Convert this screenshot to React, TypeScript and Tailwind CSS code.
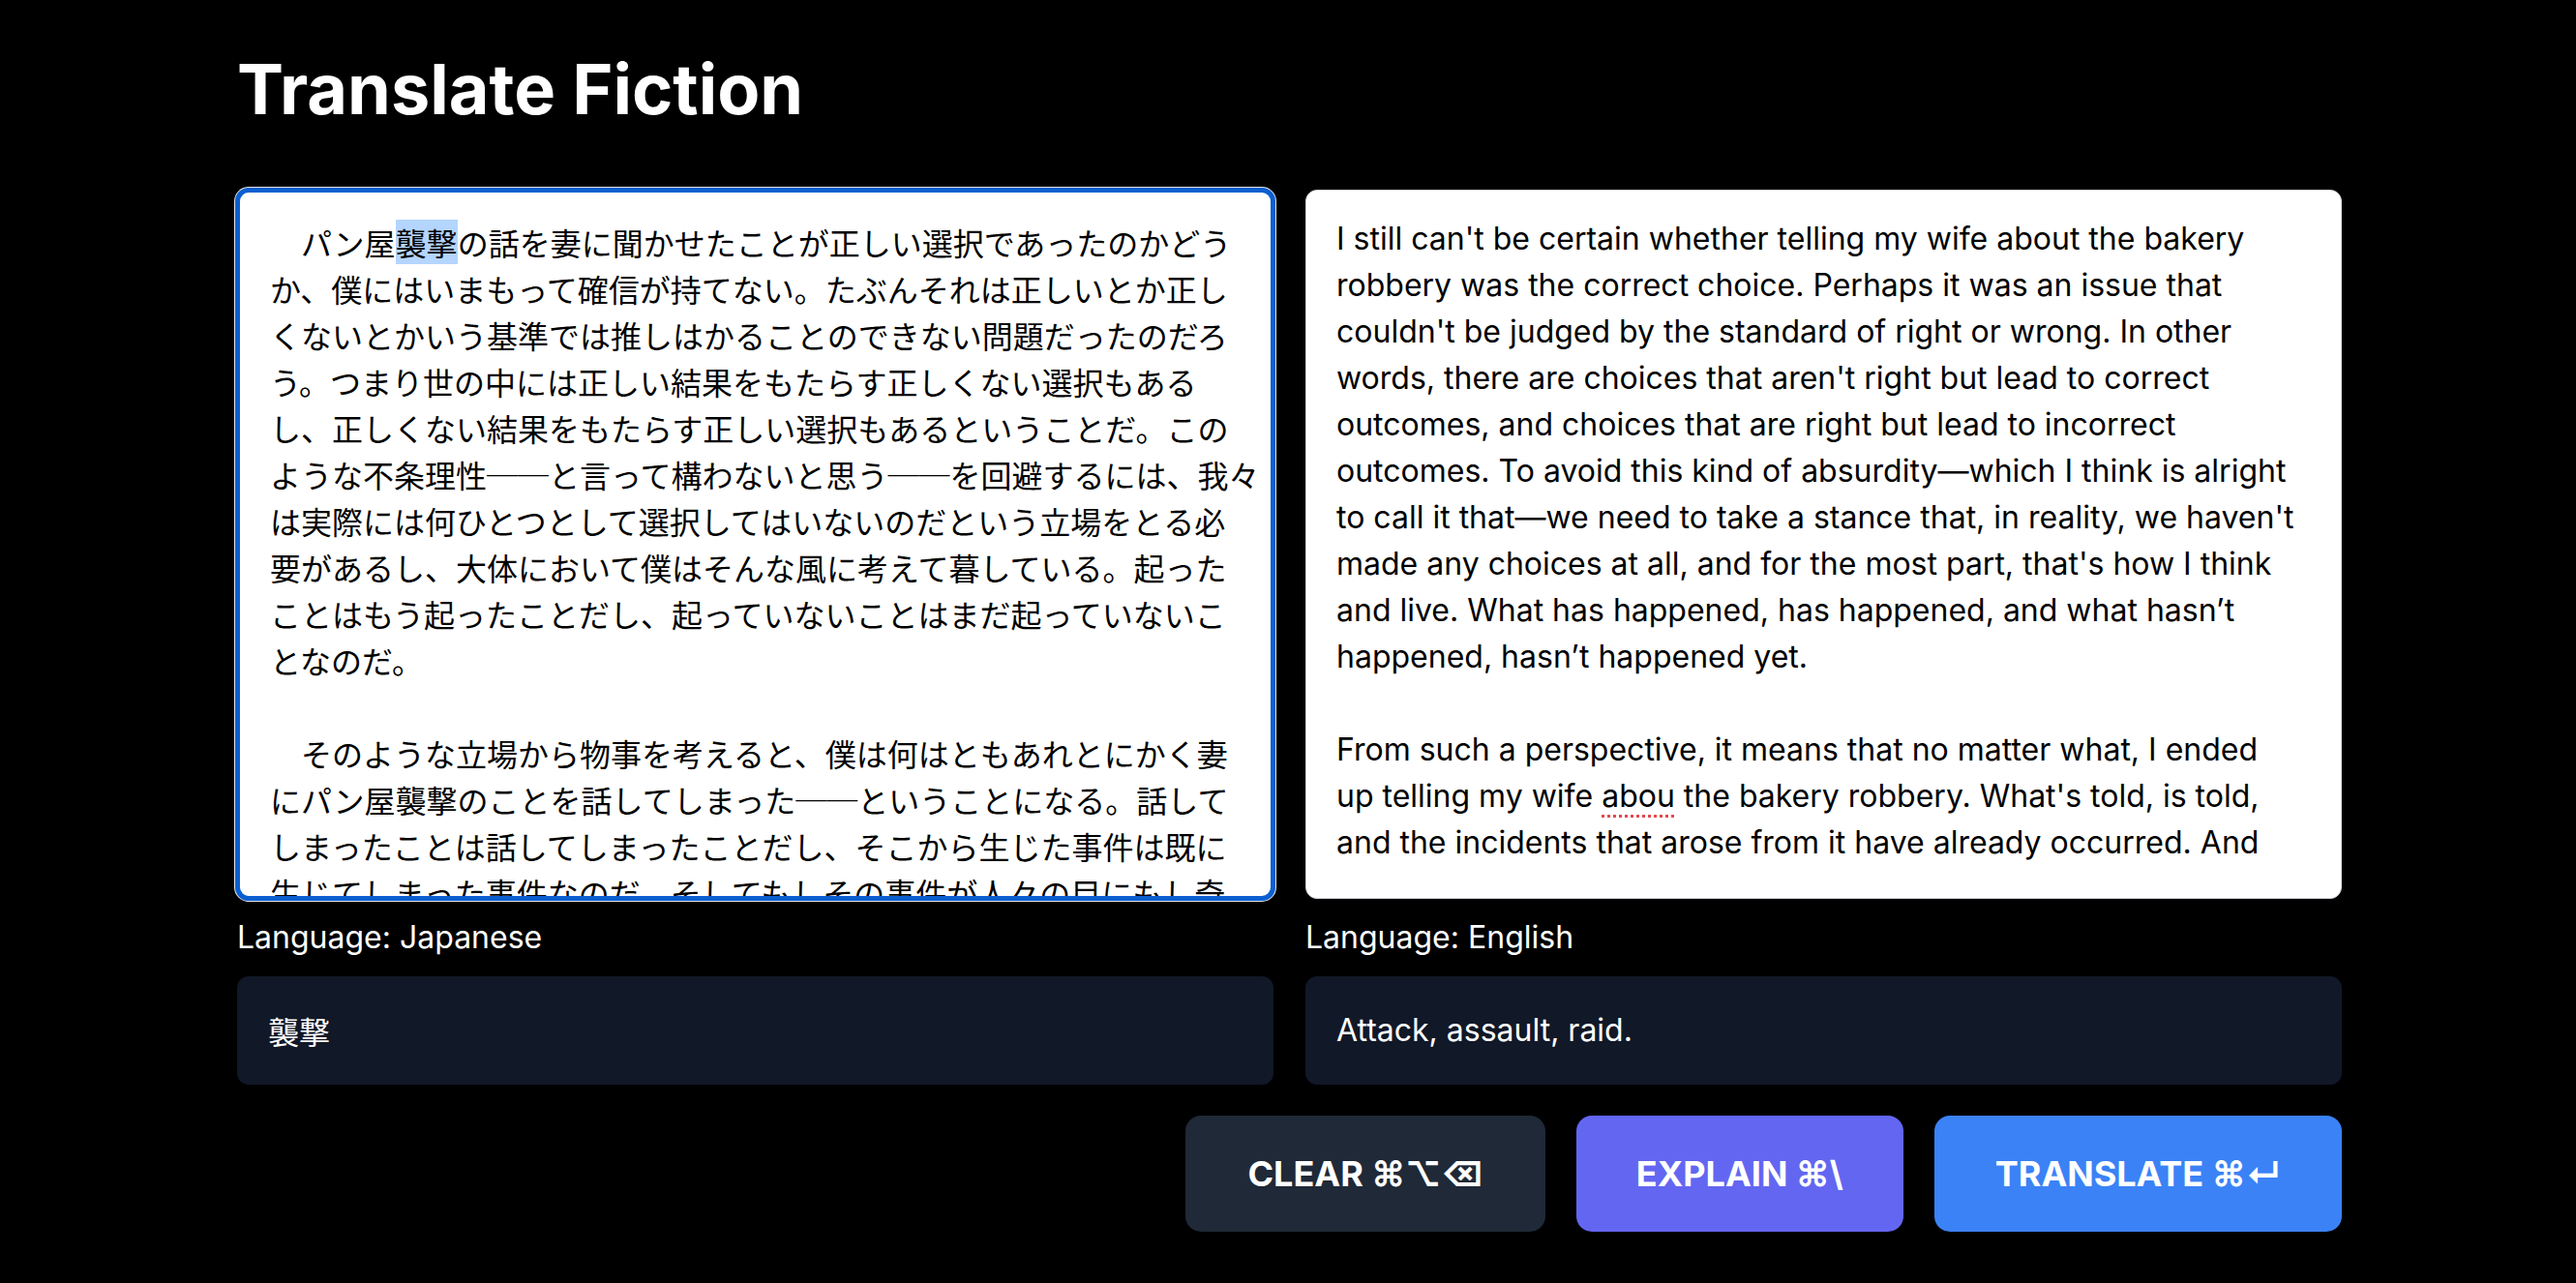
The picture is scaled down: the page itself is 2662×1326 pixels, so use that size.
import React from "react";

const jpLines: React.ReactNode[] = [
  <>
    {"\u3000パン屋"}
    <span className="bg-[#b4d5fe]">襲撃</span>
    {"の話を妻に聞かせたことが正しい選択であったのかどう"}
  </>,
  "か、僕にはいまもって確信が持てない。たぶんそれは正しいとか正し",
  "くないとかいう基準では推しはかることのできない問題だったのだろ",
  "う。つまり世の中には正しい結果をもたらす正しくない選択もある",
  "し、正しくない結果をもたらす正しい選択もあるということだ。この",
  "ような不条理性──と言って構わないと思う──を回避するには、我々",
  "は実際には何ひとつとして選択してはいないのだという立場をとる必",
  "要があるし、大体において僕はそんな風に考えて暮している。起った",
  "ことはもう起ったことだし、起っていないことはまだ起っていないこ",
  "となのだ。",
  "\u00a0",
  "\u3000そのような立場から物事を考えると、僕は何はともあれとにかく妻",
  "にパン屋襲撃のことを話してしまった──ということになる。話して",
  "しまったことは話してしまったことだし、そこから生じた事件は既に",
  "生じてしまった事件なのだ。そしてもしその事件が人々の目にもし奇",
  "妙に映るとすれば、その原因はその事件を包含する状況の総体の中に",
];

const enLines: React.ReactNode[] = [
  "I still can't be certain whether telling my wife about the bakery",
  "robbery was the correct choice. Perhaps it was an issue that",
  "couldn't be judged by the standard of right or wrong. In other",
  "words, there are choices that aren't right but lead to correct",
  "outcomes, and choices that are right but lead to incorrect",
  "outcomes. To avoid this kind of absurdity—which I think is alright",
  "to call it that—we need to take a stance that, in reality, we haven't",
  "made any choices at all, and for the most part, that's how I think",
  "and live. What has happened, has happened, and what hasn’t",
  "happened, hasn’t happened yet.",
  "\u00a0",
  "From such a perspective, it means that no matter what, I ended",
  <>
    {"up telling my wife "}
    <span className="underline decoration-dotted decoration-[#e5484d] decoration-[3px] underline-offset-[8px]">
      abou
    </span>
    {" the bakery robbery. What's told, is told,"}
  </>,
  "and the incidents that arose from it have already occurred. And",
];

export default function App() {
  return (
    <div className="min-h-screen bg-black font-['Inter','Noto_Sans_CJK_JP',sans-serif]">
      <div className="w-[2175px] ml-[245px] pt-[52px]">
        <h1 className="text-[72px] leading-[80px] font-bold text-white">
          Translate Fiction
        </h1>
        <div className="grid grid-cols-[1071px_1071px] gap-x-[33px] mt-[64px]">
          <div className="flex flex-col">
            <div className="h-[733px] rounded-[12px] border-[3px] border-[#0b5fd0] shadow-[0_0_0_2px_#0b5fd0,0_0_0_3px_#e5e7eb] bg-white pl-[31px] pr-[20px] pt-[27px] overflow-hidden text-black text-[32px] leading-[48px] font-['Noto_Sans_CJK_JP',sans-serif]">
              {jpLines.map((l, i) => (
                <div key={i} className="whitespace-nowrap">
                  {l}
                </div>
              ))}
            </div>
            <div className="mt-[16px] mb-[16px] text-[32px] leading-[48px] text-white">
              Language: Japanese
            </div>
            <div className="rounded-[12px] bg-[#111827] p-[32px] text-[32px] leading-[48px] text-white font-['Noto_Sans_CJK_JP',sans-serif]">
              襲撃
            </div>
          </div>
          <div className="flex flex-col">
            <div className="h-[733px] rounded-[12px] border border-[#d1d5db] bg-white px-[31px] pt-[26px] text-black text-[32px] leading-[48px]">
              <div className="h-[672px] overflow-hidden">
                {enLines.map((l, i) => (
                  <div key={i} className="whitespace-nowrap">
                    {l}
                  </div>
                ))}
              </div>
            </div>
            <div className="mt-[16px] mb-[16px] text-[32px] leading-[48px] text-white">
              Language: English
            </div>
            <div className="rounded-[12px] bg-[#111827] p-[32px] text-[32px] leading-[48px] text-white">
              Attack, assault, raid.
            </div>
          </div>
        </div>
        <div className="flex justify-end gap-x-[32px] mt-[32px]">
          <button className="h-[120px] rounded-[16px] bg-[#1f2937] px-[64px] text-[36px] leading-[56px] font-bold text-white uppercase font-['Inter','DejaVu_Sans',sans-serif]">
            CLEAR ⌘⌥⌫
          </button>
          <button className="h-[120px] rounded-[16px] bg-[#6366f1] px-[62px] text-[36px] leading-[56px] font-bold text-white uppercase font-['Inter','DejaVu_Sans',sans-serif]">
            EXPLAIN ⌘\
          </button>
          <button className="h-[120px] rounded-[16px] bg-[#3b82f6] px-[63px] text-[36px] leading-[56px] font-bold text-white uppercase font-['Inter','DejaVu_Sans',sans-serif]">
            TRANSLATE ⌘↵
          </button>
        </div>
      </div>
    </div>
  );
}
